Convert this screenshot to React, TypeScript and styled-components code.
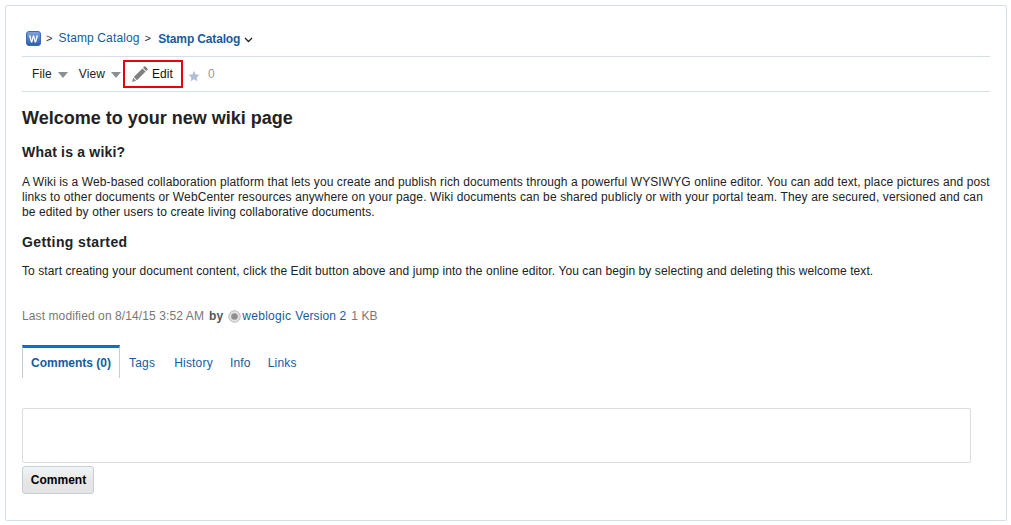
import React from "react";
import styled, { createGlobalStyle } from "styled-components";

const Global = createGlobalStyle`
  html, body { margin: 0; padding: 0; background: #fff; }
  body { font-family: "Liberation Sans", Arial, sans-serif; font-size: 12px; letter-spacing: 0.1px; color: #222; }
`;
const Panel = styled.div`
  box-sizing: border-box;
  width: 1002px;
  height: 516px;
  margin: 5px 0 0 5px;
  padding: 0 16px 0 16px;
  background: #fff;
  border: 1px solid #d6dfe6;
  border-radius: 2px;
`;
const Crumbs = styled.div`
  height: 51px;
  box-sizing: border-box;
  padding: 25px 0 0 4px;
  display: flex;
  align-items: flex-start;
  border-bottom: 1px solid #d6dfe6;
  color: #145c9e;
`;
const Sep = styled.span`
  font-size: 11px;
  color: #333;
  margin: 0 5px 0 5px;
  line-height: 14px;
`;
const CrumbLink = styled.a`
  color: #145c9e;
  letter-spacing: 0.13px;
  line-height: 15px;
  margin-left: 1px;
`;
const CrumbCurrent = styled.a`
  color: #145c9e;
  font-weight: bold;
  letter-spacing: -0.15px;
  line-height: 17px;
  margin-left: 2px;
  margin-right: 4px;
`;
const Toolbar = styled.div`
  height: 35px;
  box-sizing: border-box;
  display: flex;
  align-items: center;
  border-bottom: 1px solid #d6dfe6;
  color: #222;
`;
const Menu = styled.span`
  display: inline-flex;
  align-items: center;
  gap: 6px;
  margin-left: 11px;
  &:first-child { margin-left: 10px; }
`;
const Caret = styled.i`
  display: inline-block;
  margin-top: 2px;
  border-style: solid;
  border-width: 6px 5px 0;
  border-color: #8a8f94 transparent transparent;
`;
const EditButton = styled.span`
  box-sizing: border-box;
  margin-left: 2px;
  width: 60px;
  height: 28px;
  border: 2px solid #e8000d;
  display: inline-flex;
  align-items: center;
  padding-left: 6px;
  gap: 3px;
  color: #111;
`;
const Count = styled.span`
  color: #9a9a9a;
  margin-left: 8px;
`;
const Star = styled.svg`
  margin: 4px 0 0 5px;
`;
const Content = styled.div`
  padding-top: 16px;
`;
const H1 = styled.h1`
  margin: 0;
  font-size: 18px;
  line-height: 21px;
  font-weight: bold;
  letter-spacing: 0;
  color: #222;
`;
const H2 = styled.h2<{ $track: number; $top: number }>`
  margin: ${(p) => p.$top}px 0 0;
  font-size: 14px;
  line-height: 15px;
  font-weight: bold;
  letter-spacing: ${(p) => p.$track}px;
  color: #222;
`;
const Para = styled.div<{ $top: number }>`
  margin: ${(p) => p.$top}px 0 0;
  font-size: 12px;
  line-height: 15px;
  color: #222;
  white-space: nowrap;
`;
const Line = styled.div<{ $track: number }>`
  letter-spacing: ${(p) => p.$track}px;
`;
const Meta = styled.div`
  display: flex;
  align-items: center;
  margin-top: 29px;
  height: 15px;
  color: #777;
  white-space: nowrap;
`;
const MetaBy = styled.b`
  margin: 0 6px 0 5px;
  color: #555;
`;
const Avatar = styled.svg`
  margin: 1px 1px 0 -1px;
`;
const MetaLink = styled.a<{ $gap?: number; $track?: number }>`
  color: #145c9e;
  margin-left: ${(p) => p.$gap ?? 0}px;
  letter-spacing: ${(p) => p.$track ?? 0.1}px;
`;
const MetaSize = styled.span`
  color: #777;
  margin-left: 5px;
`;
const Tabs = styled.div`
  display: flex;
  align-items: stretch;
  margin-top: 22px;
  height: 33px;
`;
const ActiveTab = styled.a`
  box-sizing: border-box;
  width: 98px;
  border-top: 3px solid #0572ce;
  border-left: 1px solid #c4ced7;
  border-right: 1px solid #c4ced7;
  color: #145c9e;
  font-weight: bold;
  letter-spacing: 0;
  text-align: center;
  line-height: 30px;
`;
const Tab = styled.a<{ $gap: number }>`
  color: #145c9e;
  line-height: 36px;
  letter-spacing: 0.2px;
  margin-left: ${(p) => p.$gap}px;
`;
const TextBox = styled.div`
  box-sizing: border-box;
  width: 949px;
  height: 55px;
  margin-top: 30px;
  border: 1px solid #dcdcdc;
  border-radius: 2px;
`;
const Button = styled.button`
  display: block;
  box-sizing: border-box;
  width: 72px;
  height: 28px;
  margin-top: 3px;
  padding: 0 0 0 1px;
  border: 1px solid #c4ced7;
  border-radius: 3px;
  background: linear-gradient(#f0f6f8 0%, #e6e6e6 50%, #e4e4e4 100%);
  font: bold 12px "Liberation Sans", Arial, sans-serif;
  color: #000;
`;

export default function App() {
  return (
    <>
      <Global />
      <Panel>
        <Crumbs>
          <svg width="15" height="15" viewBox="0 0 15 15">
            <defs>
              <linearGradient id="w" x1="0" y1="0" x2="0" y2="1">
                <stop offset="0" stopColor="#7fa8dc" />
                <stop offset="1" stopColor="#2a5cab" />
              </linearGradient>
            </defs>
            <rect x="0.5" y="0.5" width="14" height="14" rx="2.5" fill="url(#w)" stroke="#3c6bb0" />
            <path d="M3 4.5h1.6l1 5 1.2-5h1.4l1.2 5 1-5H12l-1.9 7H8.7L7.5 7l-1.2 4.5H4.9z" fill="#fff" />
          </svg>
          <Sep>&gt;</Sep>
          <CrumbLink>Stamp Catalog</CrumbLink>
          <Sep>&gt;</Sep>
          <CrumbCurrent>Stamp Catalog</CrumbCurrent>
          <svg width="9" height="6" viewBox="0 0 9 6" style={{ marginTop: 6 }}>
            <path d="M1 1l3.5 3.5L8 1" fill="none" stroke="#222" strokeWidth="1.3" />
          </svg>
        </Crumbs>
        <Toolbar>
          <Menu>File<Caret /></Menu>
          <Menu>View<Caret /></Menu>
          <EditButton>
            <svg width="18" height="18" viewBox="0 0 18 18">
              <path d="M13.8 1l3.2 3.2-1.7 1.7-3.2-3.2z" fill="#7d7d7d" />
              <path d="M11.4 3.4l3.2 3.2-8.6 8.6-3.2-3.2z" fill="#808080" />
              <path d="M1 17l1.2-4.2 3 3z" fill="#8c8c8c" />
            </svg>
            Edit
          </EditButton>
          <Star width="12" height="12" viewBox="0 0 12 12">
            <path d="M6 .8l1.6 3.6 3.9.4-2.9 2.6.8 3.8L6 9.3l-3.4 1.9.8-3.8L.5 4.8l3.9-.4z" fill="#aebfd6" />
          </Star>
          <Count>0</Count>
        </Toolbar>
        <Content>
          <H1>Welcome to your new wiki page</H1>
          <H2 $track={0.2} $top={16}>What is a wiki?</H2>
          <Para $top={15}>
            <Line $track={0.095}>A Wiki is a Web-based collaboration platform that lets you create and publish rich documents through a powerful WYSIWYG online editor. You can add text, place pictures and post</Line>
            <Line $track={0.123}>links to other documents or WebCenter resources anywhere on your page. Wiki documents can be shared publicly or with your portal team. They are secured, versioned and can</Line>
            <Line $track={0.11}>be edited by other users to create living collaborative documents.</Line>
          </Para>
          <H2 $track={0.4} $top={15}>Getting started</H2>
          <Para $top={14}>
            <Line $track={0.088}>To start creating your document content, click the Edit button above and jump into the online editor. You can begin by selecting and deleting this welcome text.</Line>
          </Para>
          <Meta>
            Last modified on 8/14/15 3:52 AM
            <MetaBy>by</MetaBy>
            <Avatar width="13" height="13" viewBox="0 0 13 13">
              <circle cx="6.5" cy="6.5" r="5.7" fill="#e4e4e4" stroke="#b5b5b5" />
              <circle cx="6.5" cy="6.5" r="3.3" fill="#8f8f8f" />
            </Avatar>
            <MetaLink $track={0.3}>weblogic</MetaLink>
            <MetaLink $gap={4}>Version 2</MetaLink>
            <MetaSize>1 KB</MetaSize>
          </Meta>
          <Tabs>
            <ActiveTab>Comments (0)</ActiveTab>
            <Tab $gap={9}>Tags</Tab>
            <Tab $gap={19}>History</Tab>
            <Tab $gap={17}>Info</Tab>
            <Tab $gap={17}>Links</Tab>
          </Tabs>
          <TextBox />
          <Button>Comment</Button>
        </Content>
      </Panel>
    </>
  );
}
